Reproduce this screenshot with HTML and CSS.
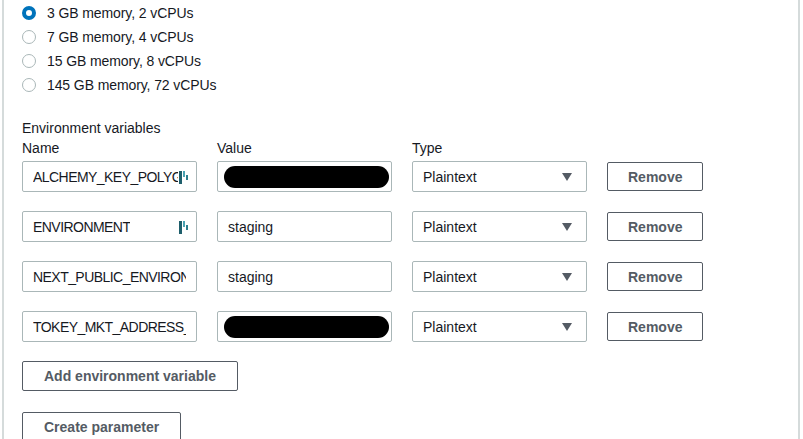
FILE: index.html
```html
<!DOCTYPE html>
<html>
<head>
<meta charset="utf-8">
<link rel="stylesheet" href="styles.css">
</head>
<body>
<div class="panel">
  <ul class="radios">
    <li><span class="radio checked"></span>3 GB memory, 2 vCPUs</li>
    <li><span class="radio"></span>7 GB memory, 4 vCPUs</li>
    <li><span class="radio"></span>15 GB memory, 8 vCPUs</li>
    <li><span class="radio"></span>145 GB memory, 72 vCPUs</li>
  </ul>

  <div class="env">
    <div class="env-title">Environment variables</div>
    <div class="grid">
      <div class="head">Name</div>
      <div class="head">Value</div>
      <div class="head">Type</div>
      <div></div>

      <div class="input"><span class="txt caps">ALCHEMY_KEY_POLYGO</span><span class="pm"><i></i><i></i><i></i></span></div>
      <div class="input"><span class="redact"></span></div>
      <div class="select">Plaintext<span class="caret"></span></div>
      <button class="btn">Remove</button>

      <div class="input"><span class="txt caps">ENVIRONMENT</span><span class="pm"><i></i><i></i><i></i></span></div>
      <div class="input">staging</div>
      <div class="select">Plaintext<span class="caret"></span></div>
      <button class="btn">Remove</button>

      <div class="input"><span class="txt caps">NEXT_PUBLIC_ENVIRON</span></div>
      <div class="input">staging</div>
      <div class="select">Plaintext<span class="caret"></span></div>
      <button class="btn">Remove</button>

      <div class="input"><span class="txt caps">TOKEY_MKT_ADDRESS_</span></div>
      <div class="input"><span class="redact"></span></div>
      <div class="select">Plaintext<span class="caret"></span></div>
      <button class="btn">Remove</button>
    </div>
    <div class="actions">
      <button class="btn wide">Add environment variable</button>
      <button class="btn wide">Create parameter</button>
    </div>
  </div>
</div>
</body>
</html>
```

FILE: styles.css
```css
html, body {
  margin: 0;
  padding: 0;
  background: #fff;
  font-family: "Liberation Sans", Arial, sans-serif;
  font-size: 14px;
  color: #16191f;
  overflow: hidden;
}
.panel {
  margin-left: 2px;
  width: 798px;
  height: 439px;
  border-left: 2px solid #d5dbdb;
  border-right: 2px solid #d5dbdb;
  box-sizing: border-box;
  padding-left: 18px;
}
.radios {
  list-style: none;
  margin: 0;
  padding: 1px 0 0 0;
}
.radios li {
  display: flex;
  align-items: center;
  height: 24px;
  letter-spacing: -0.1px;
}
.radio {
  width: 14px;
  height: 14px;
  border: 1px solid #aab7b8;
  border-radius: 50%;
  box-sizing: border-box;
  margin-right: 11px;
  flex: none;
}
.radio.checked {
  border: 4px solid #0073bb;
  background: #fff;
}
.env {
  margin-top: 21px;
}
.env-title {
  line-height: 20px;
}
.grid {
  display: grid;
  grid-template-columns: 175px 175px 175px 96px;
  column-gap: 20px;
  row-gap: 19px;
  align-items: center;
}
.head {
  line-height: 20px;
  margin-bottom: -16px;
  align-self: start;
}
.input, .select {
  height: 31px;
  border: 1px solid #aab7b8;
  border-radius: 2px;
  box-sizing: border-box;
  display: flex;
  align-items: center;
  padding: 0 10px;
  position: relative;
  overflow: hidden;
  white-space: nowrap;
}
.txt {
  overflow: hidden;
}
.caps {
  letter-spacing: -0.55px;
}
.pm {
  position: absolute;
  right: 6px;
  top: 9px;
  width: 11px;
  height: 13px;
  display: flex;
  gap: 1px;
  background: #fff;
  padding-left: 1px;
}
.pm i {
  display: block;
  width: 2px;
  background: #1e5e6b;
}
.pm i:nth-child(1) { width: 3px; height: 13px; }
.pm i:nth-child(2) { height: 6px; background: #4aa3b3; }
.pm i:nth-child(3) { height: 5px; margin-top: 4px; background: #2d7f8d; }
.redact {
  display: block;
  flex: 1;
  height: 22px;
  margin-left: -4px;
  margin-right: -8px;
  background: #000;
  border-radius: 11px;
}
.select {
  justify-content: space-between;
  padding-right: 14px;
}
.caret {
  width: 0;
  height: 0;
  border-left: 5px solid transparent;
  border-right: 5px solid transparent;
  border-top: 8px solid #545b64;
}
.btn {
  height: 29px;
  border: 1px solid #545b64;
  border-radius: 2px;
  background: #fff;
  color: #545b64;
  font-family: "Liberation Sans", Arial, sans-serif;
  font-weight: bold;
  font-size: 14px;
  padding: 0 20px;
  margin: 0;
  cursor: pointer;
}
.actions {
  display: flex;
  flex-direction: column;
  align-items: flex-start;
  gap: 21px;
  margin-top: 19px;
}
.wide {
  height: 30px;
  padding: 0 21px;
}
```
